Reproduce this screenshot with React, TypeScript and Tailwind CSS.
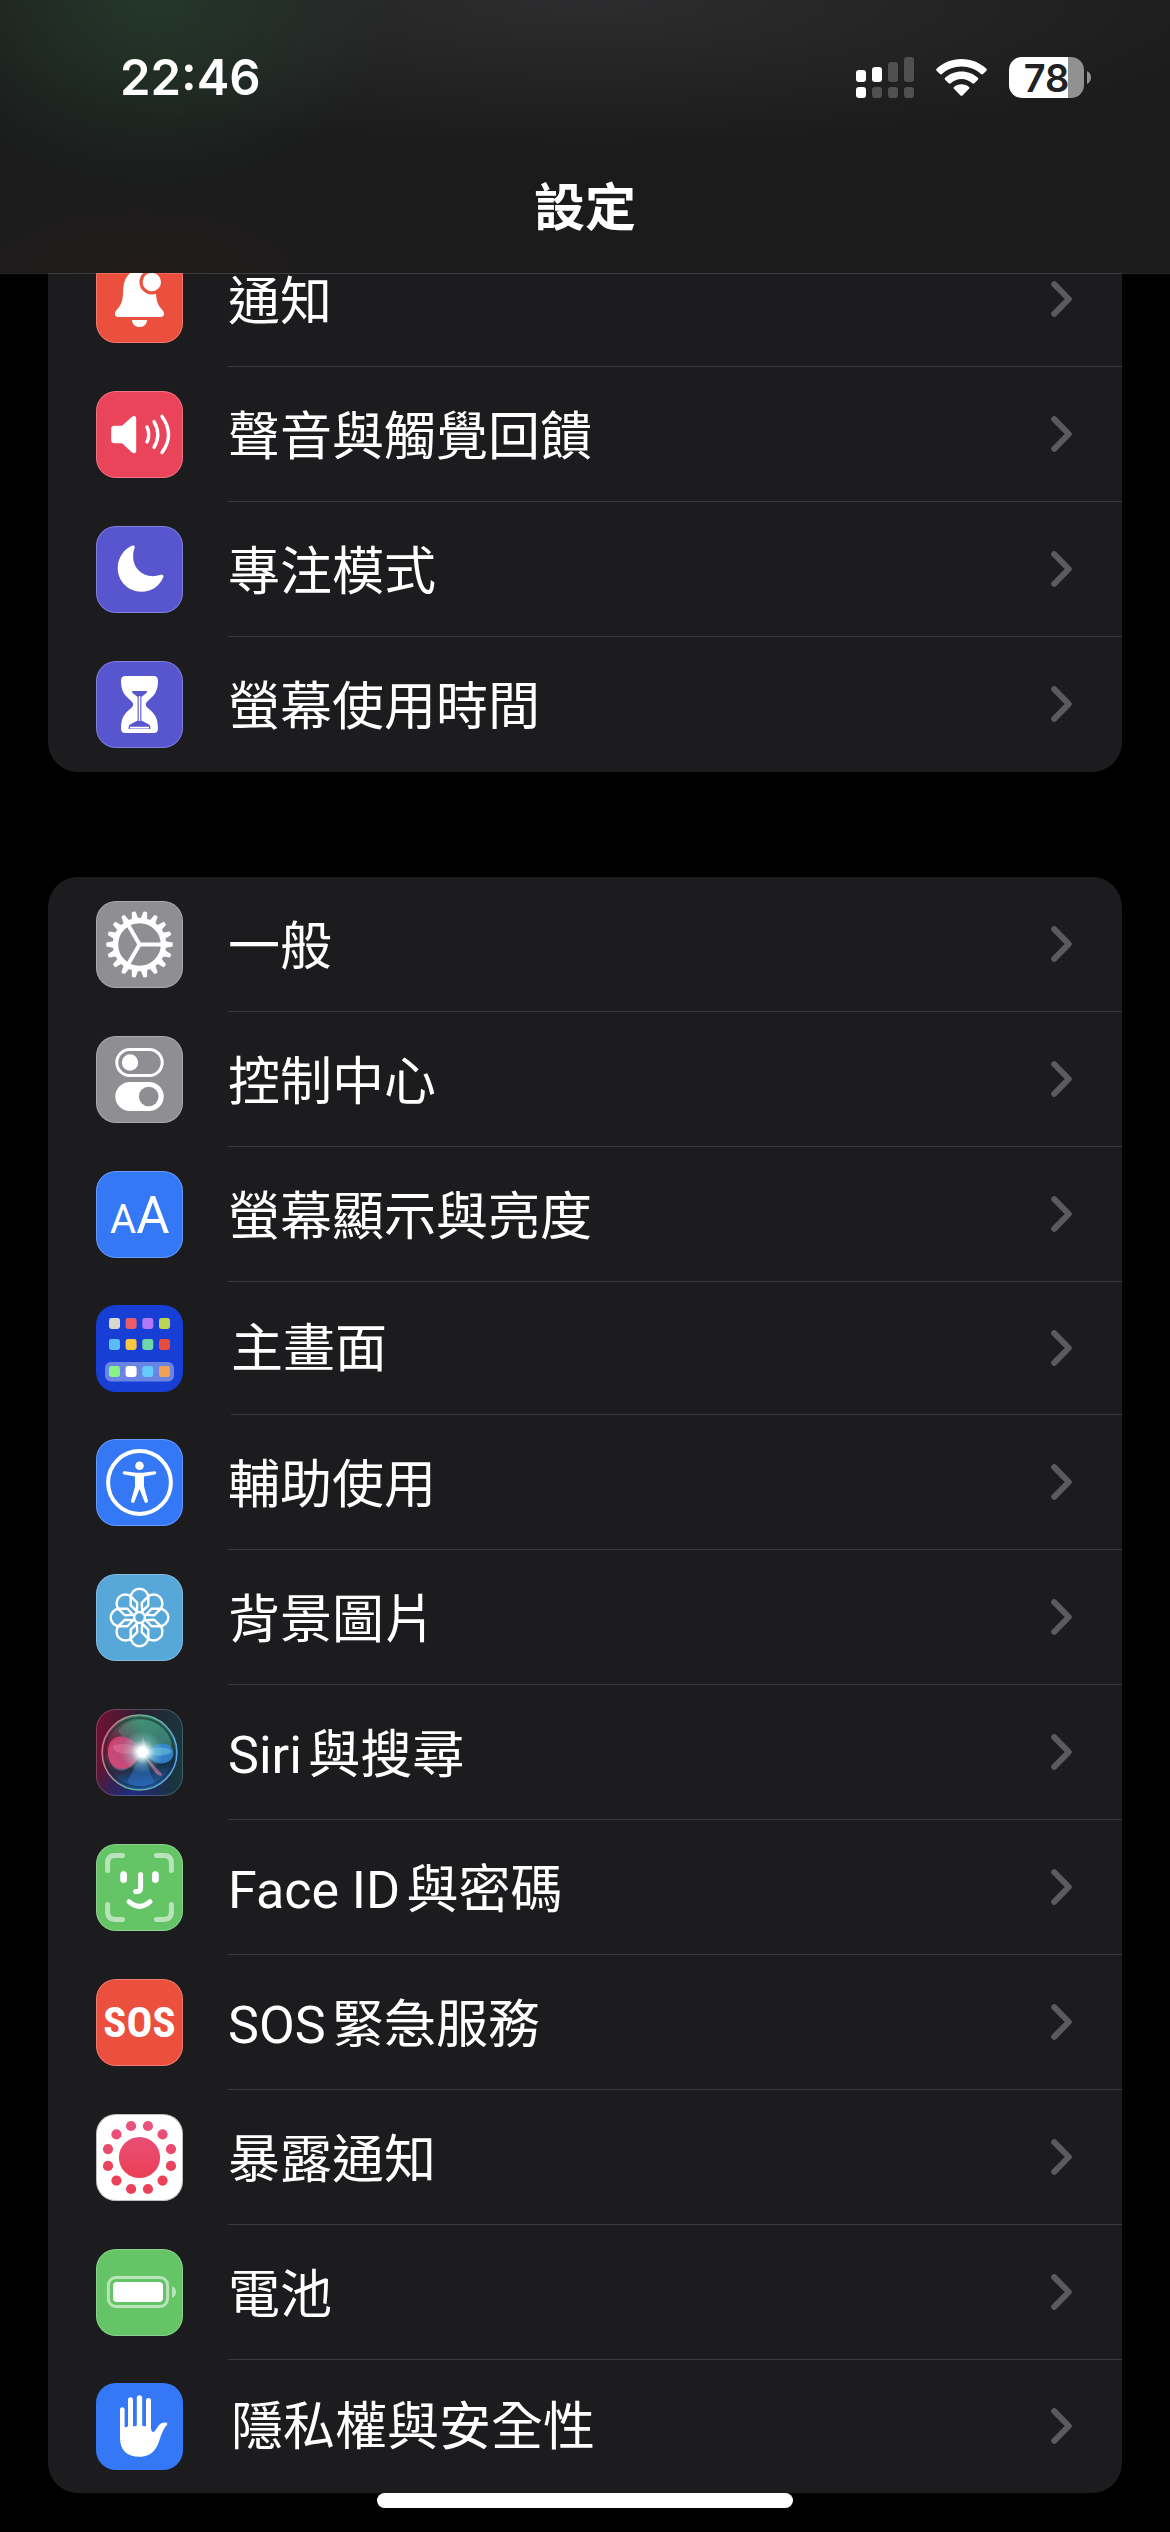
import type { ReactNode } from "react";

interface SettingsItem {
  id: string;
  label: string;
  icon: ReactNode;
  compact?: boolean;
}

function Tile({ fill, edge = "#ffffff", children }: { fill: string; edge?: string; children?: ReactNode }) {
  return (
    <svg viewBox="0 0 87 87" className="size-[87px] shrink-0" aria-hidden="true">
      <rect width="87" height="87" rx="20" fill={fill} />
      {children}
      <rect x="0.5" y="0.5" width="86" height="86" rx="19.5" fill="none" stroke={edge} strokeOpacity="0.25" />
    </svg>
  );
}

function BellIcon() {
  return (
    <Tile fill="#eb4f3d">
      <path
        fill="#fff"
        d="M43.5 14C33.5 14 27.6 22 27.2 34C26.8 45 25.6 48.6 21 53.5C17.6 57.2 18.6 61 22.4 61H64.6C68.4 61 69.4 57.2 66 53.5C61.4 48.6 60.2 45 59.8 34C59.4 22 53.5 14 43.5 14Z"
      />
      <path fill="#fff" d="M35.8 64H51.2C50.6 68.6 47.6 71 43.5 71S36.4 68.6 35.8 64Z" />
      <circle cx="55.8" cy="26" r="12.4" fill="#eb4f3d" />
      <circle cx="55.8" cy="26" r="9.2" fill="#fff" />
    </Tile>
  );
}

function SoundIcon() {
  return (
    <Tile fill="#ea445a">
      <path
        fill="#fff"
        d="M18.5 34.8H26L35.8 26C38 24 40.2 24.8 40.2 27.6V59.6C40.2 62.4 38 63.2 35.8 61.2L26 52.2H18.5Q15.2 52.2 15.2 49V38Q15.2 34.8 18.5 34.8Z"
      />
      <g fill="none" stroke="#fff" strokeWidth="3.4" strokeLinecap="round">
        <path d="M51 36Q54.6 43.5 51 51" />
        <path d="M58 30.6Q65.6 43.5 58 56.4" />
        <path d="M66 25.4Q79 43.5 66 61.6" />
      </g>
    </Tile>
  );
}

function MoonIcon() {
  return (
    <Tile fill="#5856cf">
      <path
        fill="#fff"
        d="M36.5 19.5C38.3 19 39.2 20.3 38.6 22C35.8 29.5 37 38 42 43.8C47.6 50 56 51.6 64.8 48.8C66.8 48.2 68 49.5 67.3 51.2C63.5 60.3 55.3 65.7 45.5 65.7C32.2 65.7 21.7 55.3 21.7 42C21.7 32 28 22.5 36.5 19.5Z"
      />
    </Tile>
  );
}

function HourglassIcon() {
  return (
    <Tile fill="#5856cf">
      <path
        fill="#fff"
        d="M29.5 15H57.5Q62 15 62 19.5C62 31 58 34.5 52.4 39.4C49 42.4 49 44.6 52.4 47.6C58 52.5 62 56 62 67.5Q62 72 57.5 72H29.5Q25 72 25 67.5C25 56 29 52.5 34.6 47.6C38 44.6 38 42.4 34.6 39.4C29 34.5 25 31 25 19.5Q25 15 29.5 15Z"
      />
      <path fill="#5856cf" d="M37 30H50Q52 30.4 50.4 32L45.4 36V59.4L53.4 63.8Q54.6 65 54.4 68H32.6Q32.4 65 33.6 63.8L41.6 59.4V36L36.6 32Q35 30.4 37 30Z" />
      <path stroke="#fff" strokeWidth="1.6" d="M43.5 35V60M34 66.6H53" />
    </Tile>
  );
}

const gearTeeth = Array.from({ length: 18 }, (_, i) => i * 20);

function GearIcon() {
  return (
    <Tile fill="#8e8e93">
      <g transform="translate(43.5 43.5)">
        <circle r="24" fill="none" stroke="#fff" strokeWidth="5.4" />
        {gearTeeth.map((angle) => (
          <path key={angle} fill="#fff" transform={`rotate(${angle})`} d="M25 -3.4L33 -1.9Q33.8 0 33 1.9L25 3.4Z" />
        ))}
        {[0, 120, 240].map((angle) => (
          <path key={angle} fill="#fff" transform={`rotate(${angle})`} d="M-1.5 -2H21L24 -4.5V4.5L21 2H-1.5Z" />
        ))}
      </g>
    </Tile>
  );
}

function ControlCenterIcon() {
  return (
    <Tile fill="#8e8e93">
      <rect x="20.8" y="13.5" width="45.4" height="26" rx="13" fill="none" stroke="#fff" strokeWidth="3" />
      <circle cx="34" cy="26.5" r="8.2" fill="#fff" />
      <rect x="19.3" y="46" width="48.4" height="29" rx="14.5" fill="#fff" />
      <circle cx="52.7" cy="60.5" r="9.8" fill="#8e8e93" />
    </Tile>
  );
}

function DisplayIcon() {
  return (
    <Tile fill="#3478f6">
      <g fill="#fff" textAnchor="middle" fontFamily="Roboto, sans-serif" fontWeight="400">
        <text x="27" y="62" fontSize="40">A</text>
        <text x="57" y="62" fontSize="51">A</text>
      </g>
    </Tile>
  );
}

const homeApps = [
  { y: 13, colors: ["#d9d8cf", "#ea5f67", "#b079f5", "#bbd252"] },
  { y: 34, colors: ["#5bbcf8", "#f8c741", "#70d8a6", "#e84c3b"] },
  { y: 61, colors: ["#88f284", "#ffffff", "#62cbfb", "#f1a154"] },
];
const homeColumns = [13, 29.6, 46.3, 63];

function HomeScreenIcon() {
  return (
    <Tile fill="#173fd5" edge="#173fd5">
      <rect x="9" y="57" width="69" height="19.6" rx="6" fill="#fff" fillOpacity="0.36" />
      {homeApps.map((row) =>
        row.colors.map((color, i) => (
          <rect key={color} x={homeColumns[i]} y={row.y} width="11" height="11" rx="2.4" fill={color} />
        ))
      )}
    </Tile>
  );
}

function AccessibilityIcon() {
  return (
    <Tile fill="#3478f6">
      <circle cx="43.5" cy="43.5" r="31.4" fill="none" stroke="#fff" strokeWidth="4" />
      <circle cx="43.5" cy="26.7" r="4.3" fill="#fff" />
      <path
        fill="#fff"
        d="M28.6 32.3L40 33.8H47L58.4 32.3C60.6 32.2 60.9 34.9 58.8 35.4L48 37.6V47.5L51.9 61.6C52.4 64 49.5 65 48.5 62.8L43.5 50L38.5 62.8C37.5 65 34.6 64 35.1 61.6L39 47.5V37.6L28.2 35.4C26.1 34.9 26.4 32.2 28.6 32.3Z"
      />
    </Tile>
  );
}

function WallpaperIcon() {
  return (
    <Tile fill="#58a7d9">
      <g transform="translate(43.5 43.5)" fill="none" stroke="#fff" strokeWidth="2.4" strokeLinejoin="round">
        {[0, 45, 90, 135, 180, 225, 270, 315].map((angle) => (
          <path key={angle} transform={`rotate(${angle})`} d="M-8.8 -20A8.8 8.8 0 0 1 8.8 -20V-12L0 -4L-8.8 -12Z" />
        ))}
        <circle r="5.4" fill="#58a7d9" />
      </g>
    </Tile>
  );
}

function SiriIcon() {
  return (
    <Tile fill="url(#siri-base)" edge="#c8d4dc">
      <defs>
        <linearGradient id="siri-base" x1="0" y1="0.4" x2="1" y2="0.55">
          <stop offset="0" stopColor="#6e1233" />
          <stop offset="0.45" stopColor="#2a2030" />
          <stop offset="1" stopColor="#17383f" />
        </linearGradient>
        <radialGradient id="siri-floor" cx="0.42" cy="1" r="0.5">
          <stop offset="0" stopColor="#1f2c80" />
          <stop offset="1" stopColor="#1f2c80" stopOpacity="0" />
        </radialGradient>
        <linearGradient id="siri-orb" x1="0.45" y1="0" x2="0.6" y2="1">
          <stop offset="0" stopColor="#3a8265" />
          <stop offset="0.45" stopColor="#2c5a5a" />
          <stop offset="0.7" stopColor="#173048" />
          <stop offset="1" stopColor="#2464b4" />
        </linearGradient>
        <linearGradient id="siri-rim" x1="0" y1="0.4" x2="1" y2="0.6">
          <stop offset="0" stopColor="#e0708c" />
          <stop offset="0.5" stopColor="#62bb98" />
          <stop offset="1" stopColor="#5da6e8" />
        </linearGradient>
        <radialGradient id="siri-shade" cx="0.1" cy="0.4" r="0.5">
          <stop offset="0" stopColor="#7b1537" />
          <stop offset="1" stopColor="#7b1537" stopOpacity="0" />
        </radialGradient>
        <radialGradient id="siri-pink" cx="0.55" cy="0.35" r="0.7">
          <stop offset="0" stopColor="#b95078" />
          <stop offset="1" stopColor="#e84278" />
        </radialGradient>
        <radialGradient id="siri-glow">
          <stop offset="0" stopColor="#fff" />
          <stop offset="0.28" stopColor="#f2ffff" stopOpacity="0.9" />
          <stop offset="0.6" stopColor="#a8e4e4" stopOpacity="0.35" />
          <stop offset="1" stopColor="#a8e4e4" stopOpacity="0" />
        </radialGradient>
      </defs>
      <rect width="87" height="87" rx="20" fill="url(#siri-floor)" />
      <circle cx="43.5" cy="43.5" r="37" fill="url(#siri-orb)" />
      <circle cx="43.5" cy="43.5" r="37" fill="url(#siri-shade)" />
      <path fill="#2f72c8" fillOpacity="0.5" d="M46 44L31 73C40 79 51 79 59 75Z" />
      <path fill="#5fd0b0" fillOpacity="0.25" d="M46 44C34 34 24 26 22 22C32 8 56 6 70 22C76 30 76 38 74 42Z" />
      <path fill="#6fa9d6" fillOpacity="0.4" d="M46 43C34 20 12 30 12 47C18 70 36 64 46 43Z" />
      <path
        fill="url(#siri-pink)"
        fillOpacity="0.85"
        d="M47 43C40 34 33 27 24 27.6C15 28.4 11 36 12 45C13 55 19 60.5 27 60C36 59 42 51 47 43Z"
      />
      <path fill="#f07aa2" fillOpacity="0.45" d="M47 43C38 35 26 33 17 37C17 46 32 46 47 43Z" />
      <path
        fill="#338ad8"
        fillOpacity="0.85"
        d="M46 43C54 42 58 35 66 34.6C73 34.6 77 39 77.6 44C77 51 71 55 64 54.4C56 53.6 52 46 46 43Z"
      />
      <path fill="#72c7df" fillOpacity="0.5" d="M46 43C58 48 68 48 76 43C72 36 60 38 46 43Z" />
      <path fill="#c2749a" fillOpacity="0.7" d="M47 45L66 65L65 67Q60 66 58 62Z" />
      <path fill="#e8a4bd" fillOpacity="0.5" d="M45 41L47 27L51 42Z" />
      <circle cx="46.5" cy="43" r="21" fill="url(#siri-glow)" />
      <circle cx="46.5" cy="43" r="5" fill="#fff" />
      <circle cx="43.5" cy="43.5" r="37.4" fill="none" stroke="url(#siri-rim)" strokeWidth="1.5" />
      <circle cx="43.5" cy="43.5" r="34.6" fill="none" stroke="#12262e" strokeOpacity="0.5" strokeWidth="1.6" />
    </Tile>
  );
}

function FaceIdIcon() {
  return (
    <Tile fill="#65c466">
      <g fill="none" stroke="#fff" strokeWidth="5" strokeLinecap="round">
        <path
          strokeOpacity="0.55"
          d="M11.6 26.5V19Q11.6 11.6 19 11.6H26.5M60.5 11.6H68Q75.4 11.6 75.4 19V26.5M75.4 60.5V68Q75.4 75.4 68 75.4H60.5M26.5 75.4H19Q11.6 75.4 11.6 68V60.5"
        />
        <path strokeWidth="6.8" d="M27.6 30.6V35.4M59.4 30.6V35.4" />
        <path d="M44.6 30.5V43.5Q44.6 47.6 41.5 47.6H39.6" />
        <path d="M33 57.6Q43.5 67 54 57.6" />
      </g>
    </Tile>
  );
}

function SosIcon() {
  return (
    <Tile fill="#eb4f3d">
      <text
        x="43.5"
        y="58"
        fill="#fff"
        textAnchor="middle"
        fontFamily="'Liberation Sans Narrow', 'Roboto Condensed', Roboto, sans-serif"
        fontWeight="700"
        fontSize="43"
      >
        SOS
      </text>
    </Tile>
  );
}

const exposureDots = Array.from({ length: 12 }, (_, i) => {
  const a = ((15 + i * 30) * Math.PI) / 180;
  return { x: 43.5 + 32.6 * Math.cos(a), y: 43.5 + 32.6 * Math.sin(a) };
});

function ExposureIcon() {
  return (
    <Tile fill="#ffffff" edge="#000000">
      <defs>
        <linearGradient id="exposure" gradientUnits="userSpaceOnUse" x1="0" y1="6" x2="0" y2="60">
          <stop offset="0" stopColor="#e85483" />
          <stop offset="1" stopColor="#eb4158" />
        </linearGradient>
      </defs>
      <g fill="url(#exposure)">
        <circle cx="43.5" cy="43.5" r="20.6" />
        {exposureDots.map((dot, i) => (
          <circle key={i} cx={dot.x} cy={dot.y} r="5.1" />
        ))}
      </g>
    </Tile>
  );
}

function BatteryIcon() {
  return (
    <Tile fill="#65c466">
      <rect x="12.4" y="28.5" width="59.2" height="29" rx="7.5" fill="none" stroke="#fff" strokeOpacity="0.55" strokeWidth="3" />
      <rect x="17" y="33" width="50" height="20" rx="4" fill="#fff" />
      <path fill="#fff" fillOpacity="0.55" d="M76 37Q80 39 80 43T76 49Z" />
    </Tile>
  );
}

function HandIcon() {
  return (
    <Tile fill="#3478f6" edge="#3478f6">
      <g stroke="#fff" strokeLinecap="round">
        <path strokeWidth="4.6" d="M26.3 26.5V52" />
        <path strokeWidth="5" d="M34.5 16.8V52" />
        <path strokeWidth="5.4" d="M43.5 15V52" />
        <path strokeWidth="5" d="M52.5 17.4V52" />
      </g>
      <path
        fill="#fff"
        d="M24 44H28.6Q30.4 45 32 43H37Q38.8 43.8 40.6 42.4H46.4Q48.2 43.8 50 43H55V46C55.6 49.6 58.2 49.8 59.6 47L62.6 42.6C64.6 39.6 68.6 38.8 70.8 39.8C72 41 70.8 42.4 69.4 43.8C67.4 47 66 50 64.8 53C61.6 64 57.4 73.8 43.4 73.8C31 73.8 24 67 24 55Z"
      />
    </Tile>
  );
}

const groups: SettingsItem[][] = [
  [
    { id: "notifications", label: "通知", icon: <BellIcon /> },
    { id: "sounds", label: "聲音與觸覺回饋", icon: <SoundIcon /> },
    { id: "focus", label: "專注模式", icon: <MoonIcon /> },
    { id: "screen-time", label: "螢幕使用時間", icon: <HourglassIcon /> },
  ],
  [
    { id: "general", label: "一般", icon: <GearIcon /> },
    { id: "control-center", label: "控制中心", icon: <ControlCenterIcon /> },
    { id: "display", label: "螢幕顯示與亮度", icon: <DisplayIcon /> },
    { id: "home-screen", label: "主畫面", icon: <HomeScreenIcon />, compact: true },
    { id: "accessibility", label: "輔助使用", icon: <AccessibilityIcon /> },
    { id: "wallpaper", label: "背景圖片", icon: <WallpaperIcon /> },
    { id: "siri", label: "Siri與搜尋", icon: <SiriIcon /> },
    { id: "face-id", label: "Face ID與密碼", icon: <FaceIdIcon /> },
    { id: "sos", label: "SOS緊急服務", icon: <SosIcon /> },
    { id: "exposure", label: "暴露通知", icon: <ExposureIcon /> },
    { id: "battery", label: "電池", icon: <BatteryIcon /> },
    { id: "privacy", label: "隱私權與安全性", icon: <HandIcon />, compact: true },
  ],
];

function SettingsRow({ item, last }: { item: SettingsItem; last: boolean }) {
  return (
    <li>
      <button
        type="button"
        className={`flex w-full items-center pl-12 text-left ${item.compact ? "h-[133px] gap-12" : "h-[135px] gap-[45px]"}`}
      >
        {item.icon}
        <span
          className={`flex h-full flex-1 items-center justify-between border-b pr-[50px] ${
            last ? "border-transparent" : "border-[#3a3a3c]"
          }`}
        >
          <span className={`text-[52px] leading-[76px] [text-autospace:normal] ${item.compact ? "pt-1" : "pt-2"}`}>
            {item.label}
          </span>
          <svg viewBox="0 0 21 36" className="h-9 w-[21px] shrink-0" aria-hidden="true">
            <path
              d="M3.2 3.2L17.8 18L3.2 32.8"
              fill="none"
              stroke="#5a5a5f"
              strokeWidth="6"
              strokeLinecap="round"
              strokeLinejoin="round"
            />
          </svg>
        </span>
      </button>
    </li>
  );
}

function StatusBar() {
  return (
    <div className="flex h-[141px] items-center justify-between pt-3.5 pr-[79px] pl-[120px]">
      <time className="font-[Inter] text-[49px] leading-[60px] font-semibold">22:46</time>
      <div className="flex items-center gap-[22px]">
        <svg viewBox="0 0 58 41" className="h-[41px] w-[58px]" aria-hidden="true">
          <g fill="#fff">
            <rect x="0" y="13" width="10" height="12" rx="3" />
            <rect x="16" y="10" width="10" height="15" rx="3" />
            <rect x="0" y="30" width="10" height="11" rx="3" />
          </g>
          <g fill="#505051">
            <rect x="32" y="5" width="10" height="20" rx="3" />
            <rect x="48" y="0" width="10" height="25" rx="3" />
            <rect x="16" y="30" width="10" height="11" rx="3" />
            <rect x="32" y="30" width="10" height="11" rx="3" />
            <rect x="48" y="30" width="10" height="11" rx="3" />
          </g>
        </svg>
        <svg viewBox="0 0 51 37" className="h-[37px] w-[51px]" aria-hidden="true">
          <g fill="#fff">
            <path d="M25.5 0C35.2 0 43.9 3.7 50.4 9.7Q51.3 10.7 50.4 11.7L47 15.1Q46 16 45 15.1C39.9 10.4 33.1 7.6 25.5 7.6S11.1 10.4 6 15.1Q5 16 4 15.1L0.6 11.7Q-0.3 10.7 0.6 9.7C7.1 3.7 15.8 0 25.5 0Z" />
            <path d="M25.5 12.4C31.8 12.4 37.6 14.8 41.9 18.7Q42.9 19.7 41.9 20.7L38.3 24.3Q37.3 25.1 36.3 24.3C33.4 21.7 29.6 20.1 25.5 20.1S17.6 21.7 14.7 24.3Q13.7 25.1 12.7 24.3L9.1 20.7Q8.1 19.7 9.1 18.7C13.4 14.8 19.2 12.4 25.5 12.4Z" />
            <path d="M25.5 25.2C28.4 25.2 31 26.2 33 28Q33.8 28.9 33 29.8L26.5 36.4Q25.5 37.3 24.5 36.4L18 29.8Q17.2 28.9 18 28C20 26.2 22.6 25.2 25.5 25.2Z" />
          </g>
        </svg>
        <div className="flex items-center gap-[3px]">
          <div className="flex h-[41px] w-[75px] items-center justify-center rounded-[13px] bg-[linear-gradient(90deg,#fff_79%,#919192_79%)] font-[Inter] text-[38px] leading-10 font-semibold text-[#222223]">
            78
          </div>
          <svg viewBox="0 0 4 13" className="h-[13px] w-1" aria-hidden="true">
            <path d="M0 0Q4 2.4 4 6.5T0 13Z" fill="#919192" />
          </svg>
        </div>
      </div>
    </div>
  );
}

export default function App() {
  return (
    <div className="relative min-h-screen bg-black font-[Roboto,'Noto_Sans_CJK_TC',sans-serif] text-white">
      <header className="sticky top-0 z-10 border-b border-white/15 bg-[#1b1b1c] bg-[radial-gradient(ellipse_240px_190px_at_150px_0px,rgba(36,64,44,0.7),transparent),radial-gradient(ellipse_220px_90px_at_140px_273px,rgba(44,30,26,0.4),transparent),radial-gradient(ellipse_60%_150px_at_50%_0px,rgba(48,48,50,0.85),transparent)] bg-clip-padding">
        <StatusBar />
        <div className="flex h-[132px] items-center justify-center pt-1">
          <h1 className="text-[51px] leading-[76px] font-bold">設定</h1>
        </div>
      </header>

      {/* First group is scrolled partly under the header */}
      <main className="-mt-[42px] flex flex-col gap-[105px] px-12 pb-[39px]">
        {groups.map((group) => (
          <ul key={group[0].id} className="overflow-hidden rounded-[30px] bg-[#1c1c1e]">
            {group.map((item, i) => (
              <SettingsRow key={item.id} item={item} last={i === group.length - 1} />
            ))}
          </ul>
        ))}
      </main>

      {/* Home indicator */}
      <div className="absolute bottom-6 left-1/2 h-[15px] w-[416px] -translate-x-1/2 rounded-full bg-white" />
    </div>
  );
}
